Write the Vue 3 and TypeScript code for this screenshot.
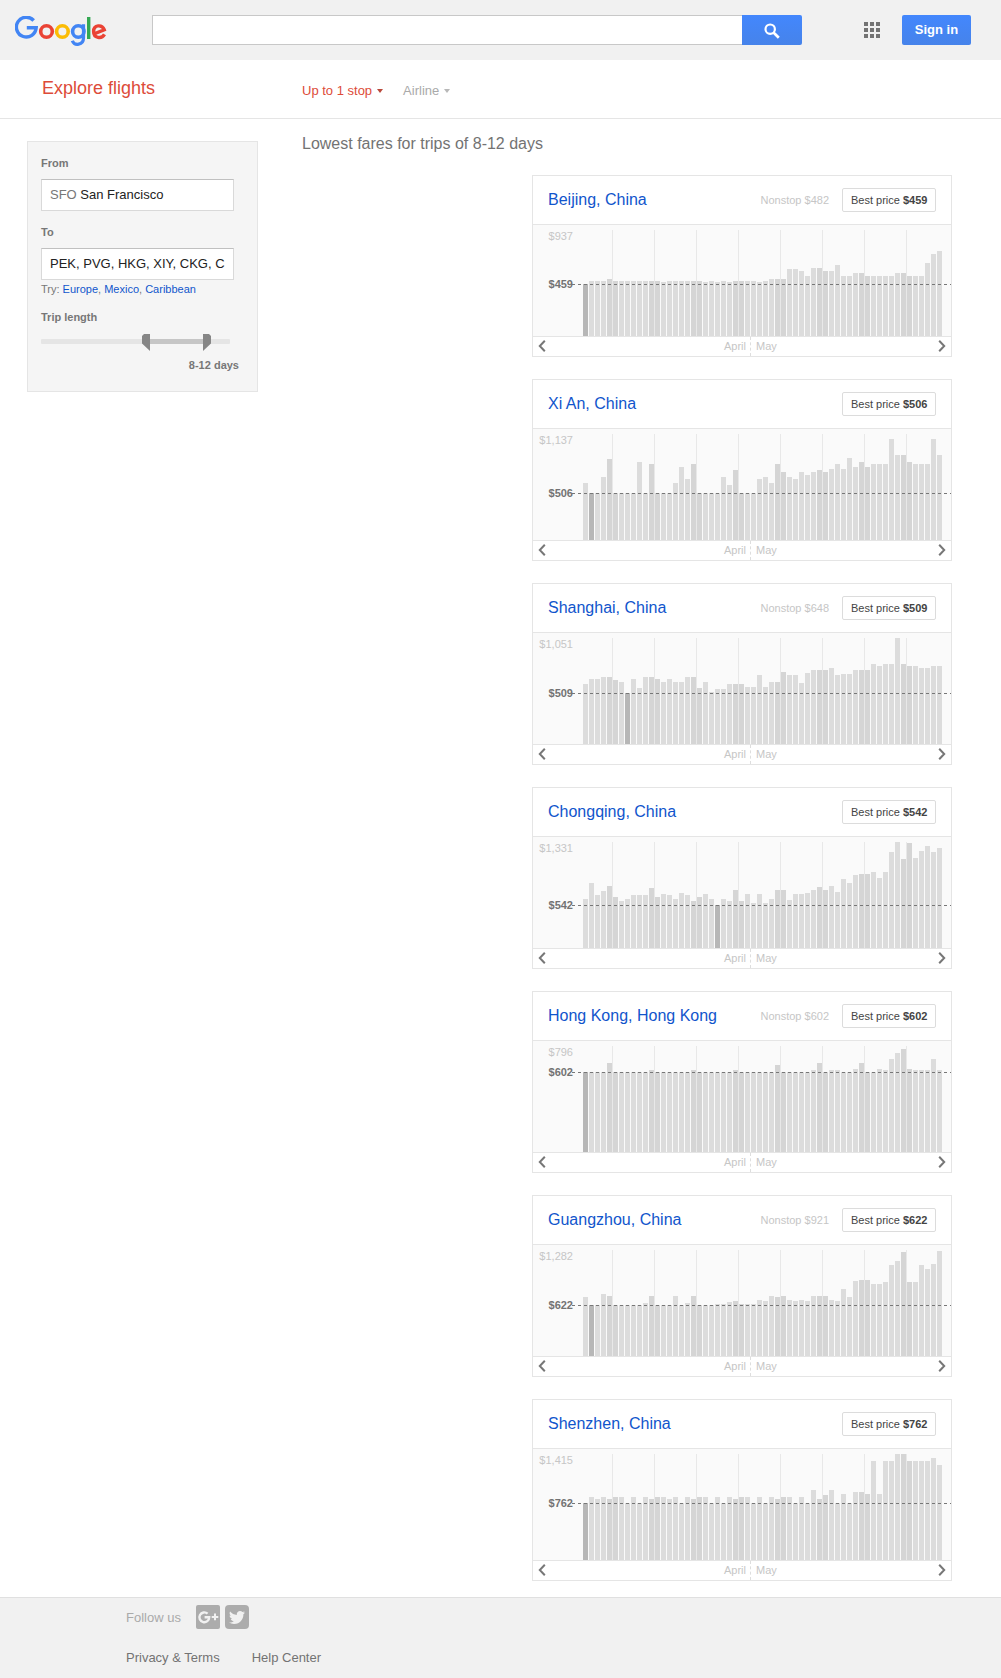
<script setup lang="ts">
interface Fare {
  city: string
  nonstop?: string
  best: string
  ceiling: string
  cheapest: number
  heights: number[]
}

const fares: Fare[] = [
  {
    city: 'Beijing, China', nonstop: '$482', best: '$459', ceiling: '$937', cheapest: 0,
    heights: [52, 55, 55, 55, 57, 55, 55, 55, 55, 55, 55, 55, 55, 54, 55, 55, 55, 55, 55, 55, 54, 55, 54, 55, 54, 55, 55, 55, 55, 54,
      55, 57, 57, 57, 67, 67, 65, 60, 68, 68, 65, 65, 71, 60, 60, 63, 63, 60, 60, 60, 60, 60, 63, 63, 60, 60, 60, 73, 82, 85],
  },
  {
    city: 'Xi An, China', best: '$506', ceiling: '$1,137', cheapest: 1,
    heights: [57, 47, 47, 63, 81, 47, 47, 47, 47, 78, 47, 76, 47, 47, 47, 57, 73, 61, 76, 47, 47, 47, 47, 63, 55, 70, 47, 47, 47, 61,
      63, 57, 76, 68, 63, 61, 68, 65, 68, 70, 68, 71, 76, 71, 82, 73, 78, 73, 76, 76, 76, 101, 85, 85, 78, 76, 76, 76, 101, 85],
  },
  {
    city: 'Shanghai, China', nonstop: '$648', best: '$509', ceiling: '$1,051', cheapest: 7,
    heights: [60, 65, 65, 67, 67, 64, 62, 51, 65, 56, 67, 67, 65, 62, 65, 62, 62, 67, 67, 56, 62, 52, 55, 55, 60, 60, 60, 57, 57, 69,
      57, 62, 62, 72, 69, 69, 61, 71, 74, 74, 74, 76, 69, 70, 70, 74, 74, 74, 80, 78, 80, 80, 106, 80, 78, 78, 76, 76, 78, 78],
  },
  {
    city: 'Chongqing, China', best: '$542', ceiling: '$1,331', cheapest: 22,
    heights: [49, 65, 53, 57, 62, 51, 47, 49, 53, 53, 53, 60, 51, 54, 53, 49, 55, 53, 47, 51, 54, 49, 43, 49, 47, 58, 47, 54, 45, 54,
      45, 49, 58, 58, 48, 54, 54, 55, 58, 61, 58, 62, 56, 69, 65, 73, 74, 74, 76, 70, 76, 96, 106, 89, 105, 90, 97, 102, 96, 100],
  },
  {
    city: 'Hong Kong, Hong Kong', nonstop: '$602', best: '$602', ceiling: '$796', cheapest: 0,
    heights: [80, 80, 80, 80, 89, 80, 80, 80, 80, 80, 80, 82, 80, 80, 80, 80, 80, 80, 82, 80, 80, 80, 80, 80, 80, 82, 80, 80, 80, 80,
      80, 80, 87, 80, 80, 80, 80, 80, 82, 89, 80, 82, 82, 80, 80, 83, 89, 80, 80, 83, 82, 93, 99, 103, 83, 82, 82, 82, 93, 82],
  },
  {
    city: 'Guangzhou, China', nonstop: '$921', best: '$622', ceiling: '$1,282', cheapest: 1,
    heights: [59, 51, 51, 62, 60, 51, 51, 51, 51, 51, 53, 60, 51, 51, 51, 60, 51, 53, 60, 51, 51, 51, 52, 52, 54, 55, 52, 52, 52, 56,
      55, 60, 59, 60, 56, 55, 56, 55, 60, 60, 60, 56, 55, 67, 59, 75, 76, 76, 72, 72, 74, 91, 95, 104, 74, 74, 91, 87, 92, 105],
  },
  {
    city: 'Shenzhen, China', best: '$762', ceiling: '$1,415', cheapest: 0,
    heights: [57, 63, 61, 63, 61, 63, 63, 57, 63, 57, 63, 61, 63, 63, 61, 63, 57, 63, 61, 63, 63, 57, 63, 57, 63, 61, 63, 63, 57, 63,
      57, 63, 61, 63, 63, 57, 63, 57, 70, 61, 65, 70, 57, 66, 57, 68, 68, 66, 99, 66, 99, 99, 106, 106, 99, 99, 99, 99, 102, 95],
  },
]

const isWeekend = (day: number) => day % 7 === 4 || day % 7 === 5
</script>

<template>
  <div class="page">
    <header class="topbar">
      <svg class="logo" width="92" height="32" viewBox="0 0 92 32" fill="none" stroke-width="3.6" role="img" aria-label="Google">
        <path d="M18.7 4.5A9.9 9.9 0 1 0 21.2 11.7H11.8" stroke="#4285f4" stroke-width="3.4" />
        <circle cx="31.5" cy="15.5" r="5.8" stroke="#ea4335" />
        <circle cx="47.4" cy="15.5" r="5.8" stroke="#fbbc05" />
        <circle cx="63.3" cy="15.5" r="5.7" stroke="#4285f4" />
        <path d="M68.5 8.2V21.8C68.5 29.5 59.4 30.2 57.3 24.7" stroke="#4285f4" stroke-width="3.2" />
        <path d="M73.7 1V23" stroke="#34a853" stroke-width="3.4" />
        <path d="M78.8 18L89.2 13.7C87.1 8.2 78.6 8.5 78.6 15.5C78.6 22.3 86.6 23.4 89.5 18.4" stroke="#ea4335" stroke-width="3.4" />
      </svg>
      <div class="search">
        <div class="search-input"></div>
        <div class="search-button">
          <svg width="16" height="16" viewBox="0 0 16 16" fill="none" stroke="#fff">
            <circle cx="6.2" cy="6.2" r="4.7" stroke-width="2.2" />
            <path d="M9.5 9.5L14.8 14.8" stroke-width="2.7" />
          </svg>
        </div>
      </div>
      <div class="apps"><i v-for="n in 9" :key="n"></i></div>
      <div class="signin">Sign in</div>
    </header>

    <nav class="subbar">
      <h1>Explore flights</h1>
      <span class="filter active">Up to 1 stop<i></i></span>
      <span class="filter">Airline<i></i></span>
    </nav>

    <main class="content">
      <aside class="panel">
        <label>From</label>
        <div class="field"><span class="code">SFO</span> San Francisco</div>
        <label>To</label>
        <div class="field">PEK, PVG, HKG, XIY, CKG, C</div>
        <p class="try">Try: <a>Europe</a>, <a>Mexico</a>, <a>Caribbean</a></p>
        <label class="trip">Trip length</label>
        <svg class="slider" width="189" height="17" viewBox="0 0 189 17">
          <rect y="5" width="189" height="5" rx="1" fill="#e5e5e5" />
          <rect x="105" y="5" width="61" height="5" fill="#c6c6c6" />
          <path d="M103 0h6v17l-8-7.5V2z" fill="#868686" />
          <path d="M168 0h-6v17l8-7.5V2z" fill="#868686" />
        </svg>
        <div class="days">8-12 days</div>
      </aside>

      <section class="results">
        <h2>Lowest fares for trips of 8-12 days</h2>
        <div class="cards">
          <article v-for="fare in fares" :key="fare.city" class="card">
            <div class="card-head">
              <h3>{{ fare.city }}</h3>
              <span v-if="fare.nonstop" class="nonstop">Nonstop {{ fare.nonstop }}</span>
              <span class="best">Best price <b>{{ fare.best }}</b></span>
            </div>
            <div class="chart">
              <div class="weeks"><i v-for="n in 8" :key="n"></i></div>
              <div class="bars">
                <i
                  v-for="(h, day) in fare.heights"
                  :key="day"
                  :class="{ weekend: isWeekend(day), cheapest: day === fare.cheapest }"
                  :style="{ height: h + 'px' }"
                ></i>
              </div>
              <span class="ceiling">{{ fare.ceiling }}</span>
              <span class="level" :style="{ bottom: fare.heights[fare.cheapest] - 8 + 'px' }">{{ fare.best }}</span>
              <div class="dash" :style="{ bottom: fare.heights[fare.cheapest] - 1 + 'px' }"></div>
            </div>
            <div class="months">
              <svg width="8" height="12" viewBox="0 0 8 12"><path d="M6.8 .8L1.8 6L6.8 11.2" /></svg>
              <span class="april">April</span>
              <span class="may">May</span>
              <svg width="8" height="12" viewBox="0 0 8 12"><path d="M1.2 .8L6.2 6L1.2 11.2" /></svg>
            </div>
          </article>
        </div>
      </section>
    </main>

    <footer class="footer">
      <div class="follow">
        <span>Follow us</span>
        <svg width="24" height="24" viewBox="0 0 24 24">
          <rect width="24" height="24" rx="2" fill="#acacac" />
          <path d="M11.6 8.7A4.9 4.9 0 1 0 13.2 12.3H8.6" fill="none" stroke="#f1f1f1" stroke-width="2.4" />
          <path d="M19 8.6v6.6M15.7 11.9h6.6" stroke="#f1f1f1" stroke-width="2" />
        </svg>
        <svg width="24" height="24" viewBox="0 0 24 24">
          <rect width="24" height="24" rx="4" fill="#acacac" />
          <path transform="translate(4 4.5) scale(.667)" fill="#f1f1f1" d="M23.954 4.569c-.885.389-1.83.654-2.825.775 1.014-.611 1.794-1.574 2.163-2.723-.951.555-2.005.959-3.127 1.184-.896-.959-2.173-1.559-3.591-1.559-2.717 0-4.92 2.203-4.92 4.917 0 .39.045.765.127 1.124C7.691 8.094 4.066 6.13 1.64 3.161c-.427.722-.666 1.561-.666 2.475 0 1.71.87 3.213 2.188 4.096-.807-.026-1.566-.248-2.228-.616v.061c0 2.385 1.693 4.374 3.946 4.827-.413.111-.849.171-1.296.171-.314 0-.615-.03-.916-.086.631 1.953 2.445 3.377 4.604 3.417-1.68 1.319-3.809 2.105-6.102 2.105-.39 0-.779-.023-1.17-.067 2.189 1.394 4.768 2.209 7.557 2.209 9.054 0 13.999-7.496 13.999-13.986 0-.209 0-.42-.015-.63.961-.689 1.8-1.56 2.46-2.548z" />
        </svg>
      </div>
      <div class="links"><span>Privacy &amp; Terms</span><span>Help Center</span></div>
    </footer>
  </div>
</template>

<style>
body {
  margin: 0;
  background: #fff;
}
</style>

<style scoped>
.page {
  width: 1001px;
  height: 1678px;
  display: flex;
  flex-direction: column;
  overflow: hidden;
  font-family: "Liberation Sans", Arial, sans-serif;
  font-size: 13px;
  color: #222;
}
h1, h2, h3, p { margin: 0; font-weight: normal; }

.topbar {
  flex: none;
  height: 60px;
  box-sizing: border-box;
  padding: 15px 30px 15px 15px;
  background: #f1f1f1;
  display: flex;
  align-items: flex-start;
}
.logo { margin-top: 1px; }
.search { display: flex; width: 650px; height: 30px; margin-left: 45px; }
.search-input { flex: 1; background: #fff; border: 1px solid #c8c8c8; border-right: 0; }
.search-button {
  width: 60px;
  display: flex;
  align-items: center;
  justify-content: center;
  background: linear-gradient(#4387fd, #4683ea);
  border-radius: 0 2px 2px 0;
}
.search-button svg { margin-top: 1px; }
.apps {
  display: grid;
  grid-template-columns: repeat(3, 4px);
  gap: 2px;
  margin: 7px 22px 0 62px;
}
.apps i { height: 4px; background: #737373; }
.signin {
  width: 69px;
  height: 30px;
  line-height: 29px;
  text-align: center;
  color: #fff;
  font-weight: bold;
  border-radius: 2px;
  background: linear-gradient(#4387fd, #4683ea);
}

.subbar {
  flex: none;
  height: 58px;
  border-bottom: 1px solid #e5e5e5;
  display: flex;
  align-items: flex-start;
}
.subbar h1 { width: 260px; margin: 18px 0 0 42px; font-size: 18px; line-height: 21px; color: #dd4b39; }
.filter { display: flex; align-items: center; margin: 23px 20px 0 0; line-height: 15px; color: #aaa; }
.filter i {
  margin: 1px 0 0 5px;
  border: 3.5px solid transparent;
  border-top: 4px solid #b8b8b8;
  border-bottom: 0;
}
.filter.active { color: #dd4b39; }
.filter.active i { border-top-color: #b9493b; }

.content { flex: none; height: 1478px; display: flex; align-items: flex-start; }
.panel {
  width: 231px;
  height: 251px;
  box-sizing: border-box;
  margin: 22px 44px 0 27px;
  padding: 14px 13px 0;
  background: #f5f5f5;
  border: 1px solid #e5e5e5;
  color: #777;
  font-size: 11px;
}
.panel label { display: block; line-height: 15px; font-weight: bold; }
.field {
  width: 193px;
  height: 32px;
  box-sizing: border-box;
  margin: 8px 0 14px;
  padding: 0 0 0 8px;
  border: 1px solid #d9d9d9;
  border-top-color: #c0c0c0;
  background: #fff;
  font-size: 13px;
  line-height: 29px;
  white-space: nowrap;
  color: #222;
}
.code { color: #777; }
.try { margin-top: -12px; line-height: 15px; }
.try a { color: #15c; }
.panel .trip { margin-top: 13px; }
.slider { display: block; margin-top: 9px; }
.days { margin: 7px 5px 0 0; line-height: 15px; font-weight: bold; text-align: right; }

.results { width: 650px; }
.results h2 { margin-top: 16px; font-size: 16px; line-height: 18px; color: #737373; }
.cards { display: flex; flex-direction: column; gap: 22px; width: 420px; margin: 22px 0 0 230px; }
.card { height: 182px; box-sizing: border-box; border: 1px solid #e5e5e5; background: #fff; }
.card-head {
  height: 48px;
  display: flex;
  align-items: center;
  padding: 0 15px;
  border-bottom: 1px solid #e5e5e5;
}
.card-head h3 { flex: 1; font-size: 16px; line-height: 18px; color: #15c; }
.nonstop { margin: 0 13px 1px 0; font-size: 11px; color: #c6c6c6; }
.best {
  width: 94px;
  height: 24px;
  box-sizing: border-box;
  padding-left: 8px;
  border: 1px solid #dcdcdc;
  border-radius: 2px;
  font-size: 11px;
  line-height: 22px;
  white-space: nowrap;
  color: #444;
}
.chart { position: relative; height: 111px; background: #fafafa; display: flex; }
.weeks {
  position: absolute;
  left: 79px;
  top: 5px;
  bottom: 0;
  display: flex;
  gap: 41px;
}
.weeks i { width: 1px; background: #e8e8e8; }
.bars { position: relative; display: flex; align-items: flex-end; gap: 1px; margin-left: 50px; }
.bars i { width: 5px; background: #dcdcdc; }
.bars i.weekend { background: #d5d5d5; }
.bars i.cheapest { background: #b7b7b7; }
.ceiling, .level {
  position: absolute;
  left: 0;
  width: 40px;
  text-align: right;
  font-size: 11px;
  line-height: 15px;
}
.ceiling { top: 4px; color: #c6c6c6; }
.level { font-weight: bold; color: #737373; }
.dash {
  position: absolute;
  left: 39px;
  right: 0;
  height: 1px;
  background: repeating-linear-gradient(90deg, #777 0 3px, transparent 3px 6px);
}
.months {
  height: 19px;
  display: flex;
  align-items: center;
  justify-content: space-between;
  padding: 0 5px;
  border-top: 1px solid #e5e5e5;
  font-size: 11px;
  line-height: 19px;
  color: #c6c6c6;
}
.months svg { margin-bottom: 1px; }
.months path { fill: none; stroke: #777; stroke-width: 2; }
.april { flex: 1; text-align: right; padding-right: 4px; }
.may { width: 182px; height: 19px; padding-left: 5px; border-left: 1px dashed #dedede; }

.footer {
  flex: 1;
  border-top: 1px solid #e0e0e0;
  background: #f1f1f1;
  padding: 7px 126px 0;
}
.follow { display: flex; align-items: center; gap: 5px; color: #aaa; }
.follow span { width: 65px; line-height: 16px; margin-bottom: -1px; }
.links { display: flex; gap: 32px; margin-top: 21px; line-height: 16px; color: #737373; }
</style>
